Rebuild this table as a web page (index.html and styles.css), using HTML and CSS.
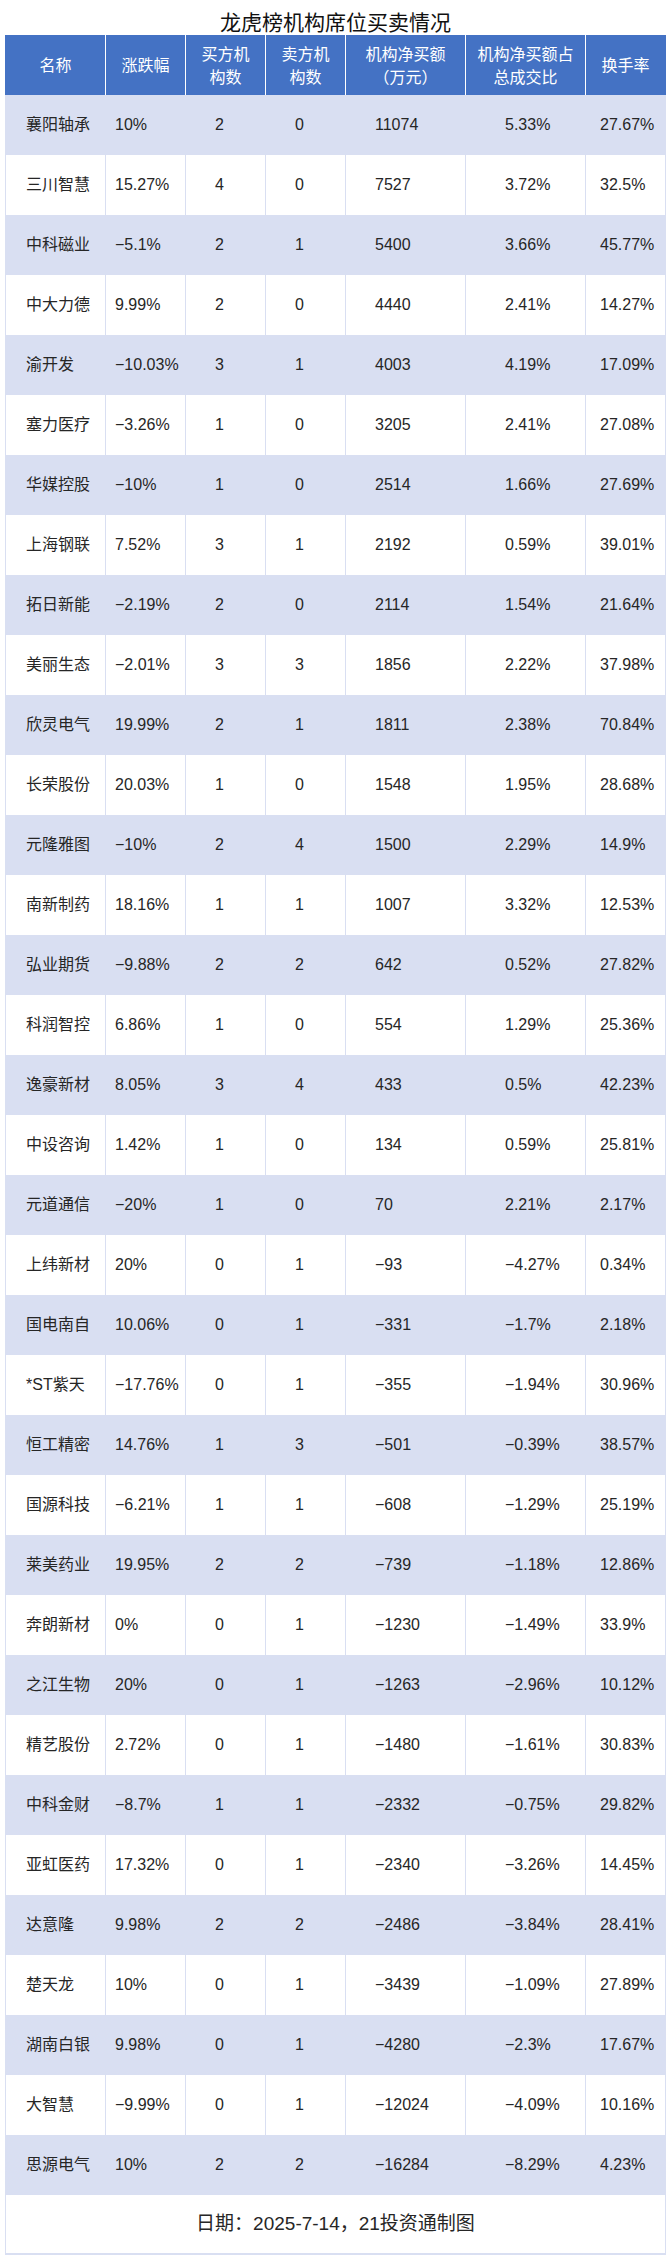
FILE: index.html
```html
<!DOCTYPE html>
<html lang="zh-CN">
<head>
<meta charset="utf-8">
<title>龙虎榜机构席位买卖情况</title>
<link rel="stylesheet" href="styles.css">
</head>
<body>
<table class="sheet">
  <caption class="title">龙虎榜机构席位买卖情况</caption>
  <colgroup>
    <col class="w-name"><col class="w-chg"><col class="w-buy"><col class="w-sell"><col class="w-net"><col class="w-ratio"><col class="w-turn">
  </colgroup>
  <thead>
    <tr class="head">
      <th>名称</th>
      <th>涨跌幅</th>
      <th><span class="hl">买方机</span><span class="hl">构数</span></th>
      <th><span class="hl">卖方机</span><span class="hl">构数</span></th>
      <th><span class="hl">机构净买额</span><span class="hl">（万元）</span></th>
      <th><span class="hl">机构净买额占</span><span class="hl">总成交比</span></th>
      <th>换手率</th>
    </tr>
  </thead>
  <tbody>
    <tr><td>襄阳轴承</td><td>10%</td><td>2</td><td>0</td><td>11074</td><td>5.33%</td><td>27.67%</td></tr>
    <tr><td>三川智慧</td><td>15.27%</td><td>4</td><td>0</td><td>7527</td><td>3.72%</td><td>32.5%</td></tr>
    <tr><td>中科磁业</td><td>−5.1%</td><td>2</td><td>1</td><td>5400</td><td>3.66%</td><td>45.77%</td></tr>
    <tr><td>中大力德</td><td>9.99%</td><td>2</td><td>0</td><td>4440</td><td>2.41%</td><td>14.27%</td></tr>
    <tr><td>渝开发</td><td>−10.03%</td><td>3</td><td>1</td><td>4003</td><td>4.19%</td><td>17.09%</td></tr>
    <tr><td>塞力医疗</td><td>−3.26%</td><td>1</td><td>0</td><td>3205</td><td>2.41%</td><td>27.08%</td></tr>
    <tr><td>华媒控股</td><td>−10%</td><td>1</td><td>0</td><td>2514</td><td>1.66%</td><td>27.69%</td></tr>
    <tr><td>上海钢联</td><td>7.52%</td><td>3</td><td>1</td><td>2192</td><td>0.59%</td><td>39.01%</td></tr>
    <tr><td>拓日新能</td><td>−2.19%</td><td>2</td><td>0</td><td>2114</td><td>1.54%</td><td>21.64%</td></tr>
    <tr><td>美丽生态</td><td>−2.01%</td><td>3</td><td>3</td><td>1856</td><td>2.22%</td><td>37.98%</td></tr>
    <tr><td>欣灵电气</td><td>19.99%</td><td>2</td><td>1</td><td>1811</td><td>2.38%</td><td>70.84%</td></tr>
    <tr><td>长荣股份</td><td>20.03%</td><td>1</td><td>0</td><td>1548</td><td>1.95%</td><td>28.68%</td></tr>
    <tr><td>元隆雅图</td><td>−10%</td><td>2</td><td>4</td><td>1500</td><td>2.29%</td><td>14.9%</td></tr>
    <tr><td>南新制药</td><td>18.16%</td><td>1</td><td>1</td><td>1007</td><td>3.32%</td><td>12.53%</td></tr>
    <tr><td>弘业期货</td><td>−9.88%</td><td>2</td><td>2</td><td>642</td><td>0.52%</td><td>27.82%</td></tr>
    <tr><td>科润智控</td><td>6.86%</td><td>1</td><td>0</td><td>554</td><td>1.29%</td><td>25.36%</td></tr>
    <tr><td>逸豪新材</td><td>8.05%</td><td>3</td><td>4</td><td>433</td><td>0.5%</td><td>42.23%</td></tr>
    <tr><td>中设咨询</td><td>1.42%</td><td>1</td><td>0</td><td>134</td><td>0.59%</td><td>25.81%</td></tr>
    <tr><td>元道通信</td><td>−20%</td><td>1</td><td>0</td><td>70</td><td>2.21%</td><td>2.17%</td></tr>
    <tr><td>上纬新材</td><td>20%</td><td>0</td><td>1</td><td>−93</td><td>−4.27%</td><td>0.34%</td></tr>
    <tr><td>国电南自</td><td>10.06%</td><td>0</td><td>1</td><td>−331</td><td>−1.7%</td><td>2.18%</td></tr>
    <tr><td>*ST紫天</td><td>−17.76%</td><td>0</td><td>1</td><td>−355</td><td>−1.94%</td><td>30.96%</td></tr>
    <tr><td>恒工精密</td><td>14.76%</td><td>1</td><td>3</td><td>−501</td><td>−0.39%</td><td>38.57%</td></tr>
    <tr><td>国源科技</td><td>−6.21%</td><td>1</td><td>1</td><td>−608</td><td>−1.29%</td><td>25.19%</td></tr>
    <tr><td>莱美药业</td><td>19.95%</td><td>2</td><td>2</td><td>−739</td><td>−1.18%</td><td>12.86%</td></tr>
    <tr><td>奔朗新材</td><td>0%</td><td>0</td><td>1</td><td>−1230</td><td>−1.49%</td><td>33.9%</td></tr>
    <tr><td>之江生物</td><td>20%</td><td>0</td><td>1</td><td>−1263</td><td>−2.96%</td><td>10.12%</td></tr>
    <tr><td>精艺股份</td><td>2.72%</td><td>0</td><td>1</td><td>−1480</td><td>−1.61%</td><td>30.83%</td></tr>
    <tr><td>中科金财</td><td>−8.7%</td><td>1</td><td>1</td><td>−2332</td><td>−0.75%</td><td>29.82%</td></tr>
    <tr><td>亚虹医药</td><td>17.32%</td><td>0</td><td>1</td><td>−2340</td><td>−3.26%</td><td>14.45%</td></tr>
    <tr><td>达意隆</td><td>9.98%</td><td>2</td><td>2</td><td>−2486</td><td>−3.84%</td><td>28.41%</td></tr>
    <tr><td>楚天龙</td><td>10%</td><td>0</td><td>1</td><td>−3439</td><td>−1.09%</td><td>27.89%</td></tr>
    <tr><td>湖南白银</td><td>9.98%</td><td>0</td><td>1</td><td>−4280</td><td>−2.3%</td><td>17.67%</td></tr>
    <tr><td>大智慧</td><td>−9.99%</td><td>0</td><td>1</td><td>−12024</td><td>−4.09%</td><td>10.16%</td></tr>
    <tr><td>思源电气</td><td>10%</td><td>2</td><td>2</td><td>−16284</td><td>−8.29%</td><td>4.23%</td></tr>
  </tbody>
  <tfoot>
    <tr><td class="note" colspan="7">日期：2025-7-14，21投资通制图</td></tr>
  </tfoot>
</table>
</body>
</html>
```

FILE: styles.css
```css
html, body {
  margin: 0;
  padding: 0;
  background: #ffffff;
}

body {
  font-family: "Liberation Sans", "Noto Sans CJK SC", sans-serif;
  color: #262626;
}

.sheet {
  margin-left: 5px;
  width: 661px;
  border-collapse: separate;
  border-spacing: 0;
  table-layout: fixed;
}

.w-name { width: 100px; }
.w-chg { width: 80px; }
.w-buy { width: 80px; }
.w-sell { width: 80px; }
.w-net { width: 120px; }
.w-ratio { width: 120px; }
.w-turn { width: 81px; }

.title {
  caption-side: top;
  height: 35px;
  box-sizing: border-box;
  padding-top: 8px;
  font-family: "Noto Sans CJK SC", sans-serif;
  font-size: 21px;
  line-height: 26px;
  color: #111111;
  text-align: center;
}

.head th {
  box-sizing: border-box;
  height: 60px;
  padding: 0;
  background: #4472c4;
  color: #ffffff;
  font-family: "Noto Sans CJK SC", sans-serif;
  font-weight: normal;
  font-size: 16px;
  line-height: 23.5px;
  text-align: center;
  vertical-align: middle;
  border-left: 1px solid #ffffff;
}

.hl {
  display: block;
  line-height: 23.5px;
}

.head th:first-child {
  border-left-color: #4472c4;
}

.head th:last-child {
  border-right: 1px solid #4472c4;
}

.sheet tbody td {
  box-sizing: border-box;
  height: 60px;
  padding: 0;
  font-size: 16px;
  line-height: 20px;
  text-align: left;
  vertical-align: middle;
  white-space: nowrap;
  border-left: 1px solid #d9dff2;
  background: #ffffff;
}

.sheet tbody tr:nth-child(odd) td {
  background: #d9dff2;
}

.sheet tbody td:last-child {
  border-right: 1px solid #d9dff2;
}

.sheet tbody td:nth-child(1) { padding-left: 20px; }
.sheet tbody td:nth-child(2) { padding-left: 9px; }
.sheet tbody td:nth-child(3) { padding-left: 29px; }
.sheet tbody td:nth-child(4) { padding-left: 29px; }
.sheet tbody td:nth-child(5) { padding-left: 29px; }
.sheet tbody td:nth-child(6) { padding-left: 39px; }
.sheet tbody td:nth-child(7) { padding-left: 14px; }

.note {
  box-sizing: border-box;
  height: 60px;
  padding: 0;
  text-align: center;
  vertical-align: middle;
  font-size: 19px;
  line-height: 24px;
  color: #262626;
  border-left: 1px solid #d9dff2;
  border-right: 1px solid #d9dff2;
  border-bottom: 2px solid #d9dff2;
}
```
